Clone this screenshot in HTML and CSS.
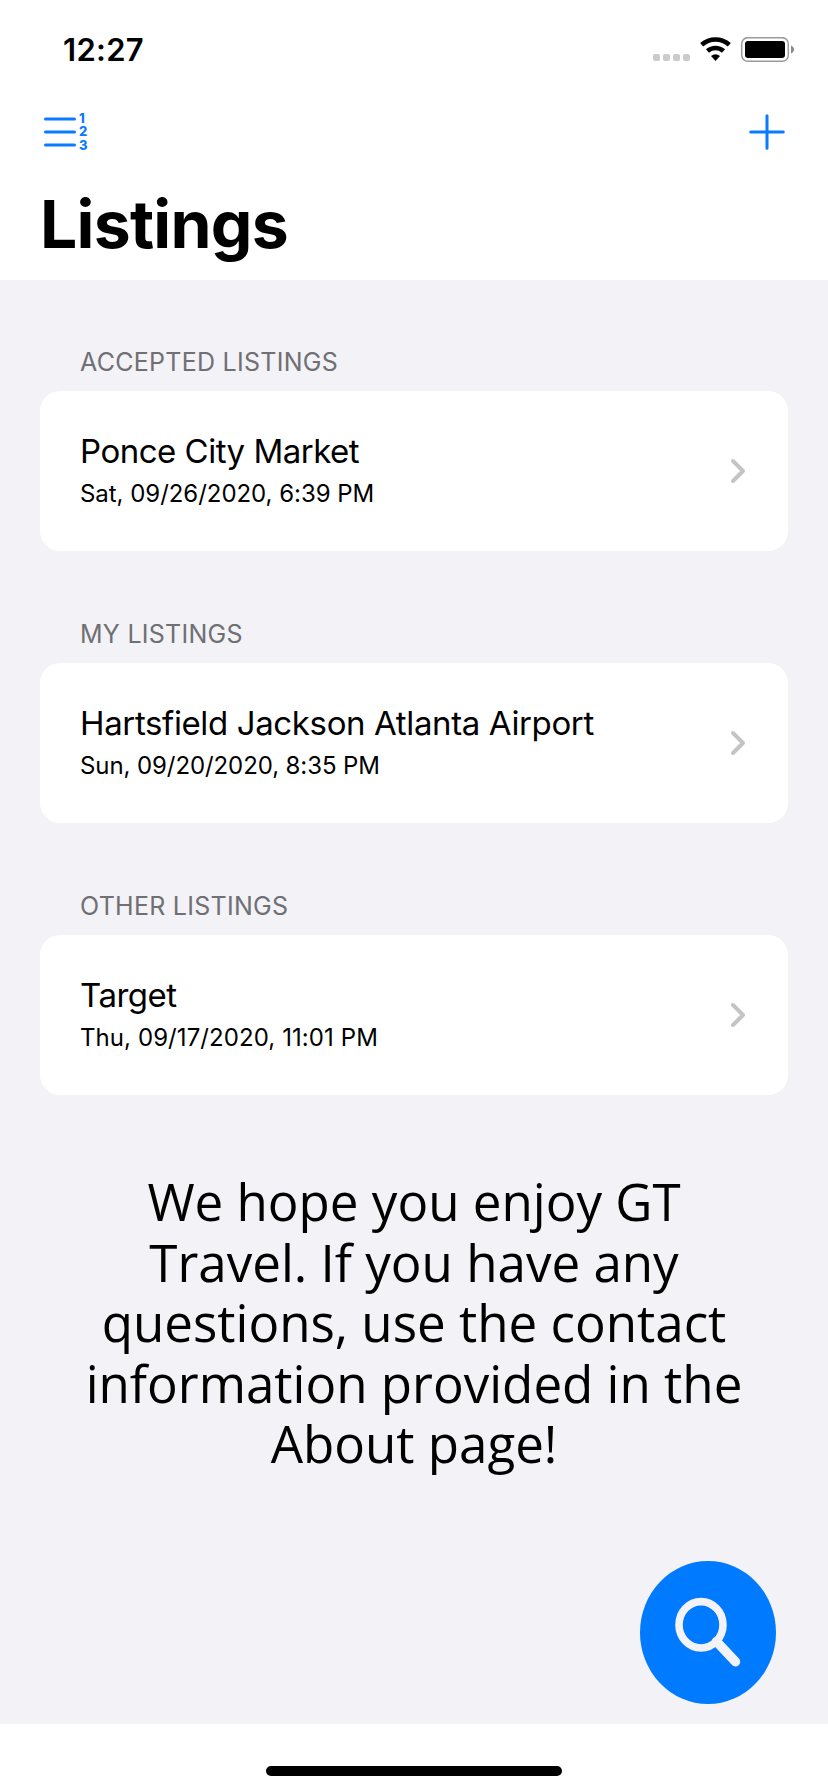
FILE: index.html
```html
<!DOCTYPE html>
<html lang="en">
<head>
<meta charset="utf-8">
<title>Listings</title>
<link rel="stylesheet" href="styles.css">
</head>
<body>
<div class="screen">
  <header class="header">
    <div class="status">
      <span class="clock">12:27</span>
      <svg class="status-icons" width="142" height="26" viewBox="0 0 142 26">
        <g fill="#cbcbcb">
          <rect x="0" y="17" width="7" height="7" rx="2"/>
          <rect x="10" y="17" width="7" height="7" rx="2"/>
          <rect x="20" y="17" width="7" height="7" rx="2"/>
          <rect x="30" y="17" width="7" height="7" rx="2"/>
        </g>
        <path d="M48.700 7.800a20.500 20.500 0 0 1 27.600 0M54.500 14a12 12 0 0 1 16 0" fill="none" stroke="#000" stroke-width="4.600"/>
        <path d="M58 19a7.200 7.200 0 0 1 9 0L62.500 24z"/>
        <rect x="88.700" y="0.700" width="46.600" height="23.600" rx="6" fill="none" stroke="#9b9b9b" stroke-width="1.500"/>
        <rect x="92" y="4" width="40" height="17" rx="3"/>
        <path d="M138 8.500c4 1.500 4 6.500 0 8z" fill="#8a8a8a"/>
      </svg>
    </div>
    <nav class="toolbar">
      <svg class="list-icon" width="46" height="40" viewBox="0 0 46 40">
        <path d="M2.500 7H31.500M2.500 20H31.500M2.500 33H31.500" stroke="#0a7aff" stroke-width="3" stroke-linecap="round"/>
        <g class="digits">
          <text x="36" y="11">1</text>
          <text x="36" y="24.300">2</text>
          <text x="36" y="37.500">3</text>
        </g>
      </svg>
      <svg width="36" height="36" viewBox="0 0 36 36">
        <path d="M18 1.700V34.300M1.700 18H34.300" stroke="#0a7aff" stroke-width="3" stroke-linecap="round"/>
      </svg>
    </nav>
    <h1 class="title">Listings</h1>
  </header>
  <main class="content">
    <section class="group accepted">
      <h2 class="label">ACCEPTED LISTINGS</h2>
      <div class="card">
        <div class="info"><div class="place">Ponce City Market</div><div class="date">Sat, 09/26/2020, 6:39 PM</div></div>
        <svg class="chevron" width="16" height="26" viewBox="0 0 16 26"><path d="M3 3L13 13L3 23"/></svg>
      </div>
    </section>
    <section class="group mine">
      <h2 class="label">MY LISTINGS</h2>
      <div class="card">
        <div class="info"><div class="place">Hartsfield Jackson Atlanta Airport</div><div class="date">Sun, 09/20/2020, 8:35 PM</div></div>
        <svg class="chevron" width="16" height="26" viewBox="0 0 16 26"><path d="M3 3L13 13L3 23"/></svg>
      </div>
    </section>
    <section class="group other">
      <h2 class="label">OTHER LISTINGS</h2>
      <div class="card">
        <div class="info"><div class="place">Target</div><div class="date">Thu, 09/17/2020, 11:01 PM</div></div>
        <svg class="chevron" width="16" height="26" viewBox="0 0 16 26"><path d="M3 3L13 13L3 23"/></svg>
      </div>
    </section>
    <p class="message">We hope you enjoy GT<br>Travel. If you have any<br>questions, use the contact<br>information provided in the<br>About page!</p>
    <button class="search" aria-label="Search">
      <svg width="136" height="143" viewBox="0 0 136 143" fill="none" stroke="#f2f2f7">
        <ellipse cx="61" cy="63.800" rx="22" ry="23.200" stroke-width="7.600"/>
        <path d="M76.500 80.500L95.500 100.800" stroke-width="9.400" stroke-linecap="round"/>
      </svg>
    </button>
  </main>
  <footer class="footer"><div class="home-bar"></div></footer>
</div>
</body>
</html>
```
FILE: styles.css
```css
* { box-sizing: border-box; }
body { margin: 0; background: #fff; color: #000; font-family: Inter, "Liberation Sans", sans-serif; }
svg { display: block; }
.screen { width: 828px; height: 1792px; display: flex; flex-direction: column; }
.header { height: 280px; flex: none; }
.status { height: 88px; padding: 37px 33px 0 63px; display: flex; justify-content: space-between; align-items: flex-start; }
.clock { font-size: 31px; line-height: 26px; font-weight: 600; letter-spacing: 0.3px; }
.toolbar { height: 88px; padding: 0 43px 0 43px; display: flex; justify-content: space-between; align-items: center; }
.list-icon { overflow: visible; }
.digits { font-size: 13px; font-weight: 800; fill: #0a7aff; }
.title { margin: 0; padding: 8px 0 0 40px; font-size: 66px; line-height: 80px; font-weight: 700; letter-spacing: -0.75px; }
.content { height: 1444px; flex: none; background: #f2f2f7; padding: 0 40px; display: flex; flex-direction: column; }
.group { height: 272px; flex: none; padding-top: 67px; white-space: nowrap; }
.label { margin: 0; height: 44px; padding-left: 40px; font-size: 25px; line-height: 30px; font-weight: 400; letter-spacing: 0.27px; color: #6f6f74; }
.card { height: 160px; padding: 40px 42px 0 40px; border-radius: 20px; background: #fff; display: flex; justify-content: space-between; }
.place { font-size: 33px; line-height: 40px; letter-spacing: -0.5px; }
.mine .place { letter-spacing: -0.37px; }
.date { font-size: 24px; line-height: 30px; margin-top: 7.500px; letter-spacing: -0.04px; }
.mine .date { letter-spacing: -0.09px; }
.other .date { letter-spacing: 0.08px; }
.chevron { margin-top: 27px; fill: none; stroke: #c4c4c7; stroke-width: 4; stroke-linecap: round; stroke-linejoin: round; }
.message { margin: 75px -40px 0; text-align: center; font-family: "Open Sans", sans-serif; font-size: 51.100px; line-height: 60.500px; }
.search { width: 136px; height: 143px; margin: auto 12px 20px auto; padding: 0; border: 0; border-radius: 50%; background: #007aff; }
.footer { height: 68px; padding-top: 42px; display: flex; justify-content: center; }
.home-bar { width: 296px; height: 10px; border-radius: 5px; background: #000; }
```
